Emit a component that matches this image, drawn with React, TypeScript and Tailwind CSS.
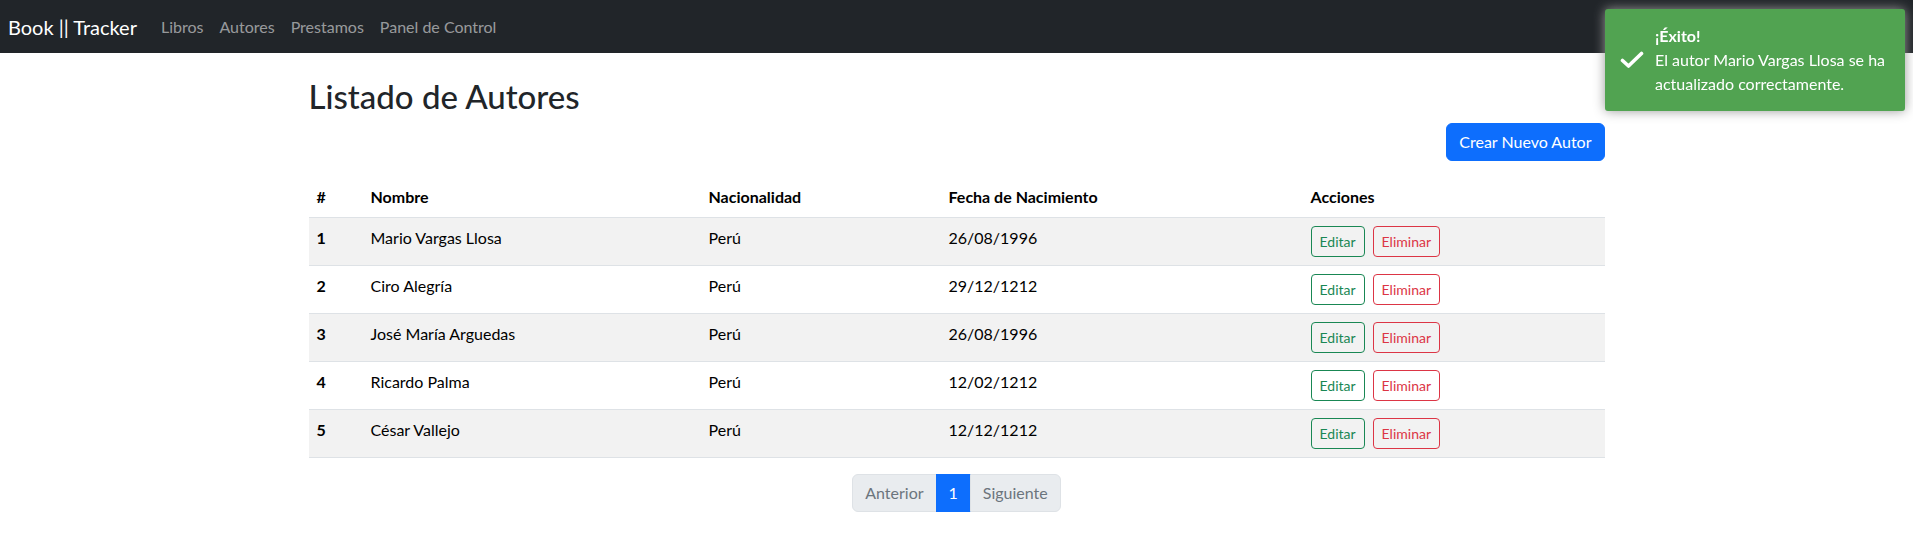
import React from "react";

const autores = [
  { id: 1, nombre: "Mario Vargas Llosa", nacionalidad: "Perú", fecha: "26/08/1996" },
  { id: 2, nombre: "Ciro Alegría", nacionalidad: "Perú", fecha: "29/12/1212" },
  { id: 3, nombre: "José María Arguedas", nacionalidad: "Perú", fecha: "26/08/1996" },
  { id: 4, nombre: "Ricardo Palma", nacionalidad: "Perú", fecha: "12/02/1212" },
  { id: 5, nombre: "César Vallejo", nacionalidad: "Perú", fecha: "12/12/1212" },
];

function Navbar() {
  return (
    <nav className="h-[53px] bg-[#212529] flex items-center pl-2 pr-3">
      <a className="text-[20px] leading-[30px] text-white mr-4">Book || Tracker</a>
      {["Libros", "Autores", "Prestamos", "Panel de Control"].map((l) => (
        <a key={l} className="px-2 text-[16px] leading-6 text-[rgba(255,255,255,0.55)]">
          {l}
        </a>
      ))}
    </nav>
  );
}

function Toast() {
  return (
    <div className="fixed top-[9px] right-[8px] w-[300px] rounded-[3px] bg-[#51a351] text-white pl-[50px] pr-[15px] py-[15px] shadow-[0_0_12px_#999]">
      <svg
        className="absolute left-[15px] top-1/2 -translate-y-1/2"
        width="24"
        height="18"
        viewBox="0 0 24 18"
        fill="none"
      >
        <path d="M2.5 9.5 L8.5 15 L21.5 2.5" stroke="white" strokeWidth="3.6" strokeLinecap="round" strokeLinejoin="round" />
      </svg>
      <div className="font-bold leading-6">¡Éxito!</div>
      <div className="leading-6 whitespace-nowrap">
        El autor Mario Vargas Llosa se ha
        <br />
        actualizado correctamente.
      </div>
    </div>
  );
}

export default function App() {
  return (
    <div className="min-h-screen bg-white font-['Lato',sans-serif] text-[16px] leading-6 text-[#212529]">
      <Navbar />
      <main className="mx-auto w-[1296px] pt-6">
        <h2 className="text-[33px] font-medium leading-[38px] mb-2">Listado de Autores</h2>
        <div className="flex justify-end mb-4">
          <button className="bg-[#0d6efd] border border-[#0d6efd] text-white px-3 py-1.5 rounded-md leading-6">
            Crear Nuevo Autor
          </button>
        </div>
        <table className="w-full table-fixed border-collapse text-black mb-4">
          <colgroup>
            <col className="w-[54px]" />
            <col className="w-[338px]" />
            <col className="w-[240px]" />
            <col className="w-[362px]" />
            <col className="w-[302px]" />
          </colgroup>
          <thead>
            <tr>
              {["#", "Nombre", "Nacionalidad", "Fecha de Nacimiento", "Acciones"].map((h) => (
                <th key={h} className="text-left font-bold p-2 border-b border-[#dee2e6] align-bottom">
                  {h}
                </th>
              ))}
            </tr>
          </thead>
          <tbody>
            {autores.map((a, i) => (
              <tr key={a.id} className={i % 2 === 0 ? "bg-[#f2f2f2]" : "bg-white"}>
                <th className="text-left font-bold p-2 border-b border-[#dee2e6] align-top">{a.id}</th>
                <td className="p-2 border-b border-[#dee2e6] align-top">{a.nombre}</td>
                <td className="p-2 border-b border-[#dee2e6] align-top">{a.nacionalidad}</td>
                <td className="p-2 border-b border-[#dee2e6] align-top">{a.fecha}</td>
                <td className="p-2 border-b border-[#dee2e6] align-top">
                  <div className="flex gap-2">
                    <button className="border border-[#198754] text-[#198754] px-2 py-1 text-[14px] leading-[21px] rounded">
                      Editar
                    </button>
                    <button className="border border-[#dc3545] text-[#dc3545] px-2 py-1 text-[14px] leading-[21px] rounded">
                      Eliminar
                    </button>
                  </div>
                </td>
              </tr>
            ))}
          </tbody>
        </table>
        <div className="flex justify-center">
          <ul className="flex">
            <li className="px-3 py-1.5 border border-[#dee2e6] bg-[#e9ecef] text-[#6c757d] rounded-l-md">Anterior</li>
            <li className="-ml-px px-3 py-1.5 border border-[#0d6efd] bg-[#0d6efd] text-white">1</li>
            <li className="-ml-px px-3 py-1.5 border border-[#dee2e6] bg-[#e9ecef] text-[#6c757d] rounded-r-md">Siguiente</li>
          </ul>
        </div>
      </main>
      <Toast />
    </div>
  );
}
